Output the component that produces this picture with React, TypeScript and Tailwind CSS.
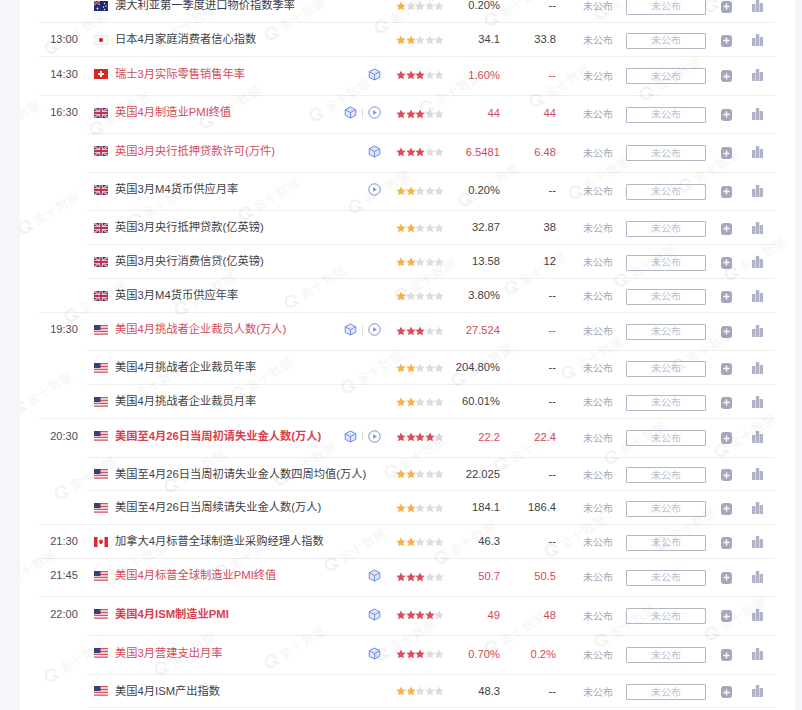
import type { FC } from 'react';

type Row = {
  time?: string;
  flag: 'au' | 'jp' | 'ch' | 'uk' | 'us' | 'ca';
  name: string;
  stars: number;
  prev: string;
  cons: string;
  h: string;
  tall?: boolean;
  bold?: boolean;
  cube?: boolean;
  play?: boolean;
  last?: boolean;
};

const rows: Row[] = [
  { flag: 'au', name: '澳大利亚第一季度进口物价指数季率', stars: 1, prev: '0.20%', cons: '--', h: 'h-[34px]', last: true },
  { time: '13:00', flag: 'jp', name: '日本4月家庭消费者信心指数', stars: 2, prev: '34.1', cons: '33.8', h: 'h-[34px]', last: true },
  { time: '14:30', flag: 'ch', name: '瑞士3月实际零售销售年率', stars: 3, prev: '1.60%', cons: '--', h: 'h-[39px]', tall: true, cube: true, last: true },
  { time: '16:30', flag: 'uk', name: '英国4月制造业PMI终值', stars: 3, prev: '44', cons: '44', h: 'h-[38px]', tall: true, cube: true, play: true },
  { flag: 'uk', name: '英国3月央行抵押贷款许可(万件)', stars: 3, prev: '6.5481', cons: '6.48', h: 'h-[39px]', tall: true, cube: true },
  { flag: 'uk', name: '英国3月M4货币供应月率', stars: 2, prev: '0.20%', cons: '--', h: 'h-[38px]', tall: true, play: true },
  { flag: 'uk', name: '英国3月央行抵押贷款(亿英镑)', stars: 2, prev: '32.87', cons: '38', h: 'h-[34px]' },
  { flag: 'uk', name: '英国3月央行消费信贷(亿英镑)', stars: 2, prev: '13.58', cons: '12', h: 'h-[34px]' },
  { flag: 'uk', name: '英国3月M4货币供应年率', stars: 1, prev: '3.80%', cons: '--', h: 'h-[34px]', last: true },
  { time: '19:30', flag: 'us', name: '美国4月挑战者企业裁员人数(万人)', stars: 3, prev: '27.524', cons: '--', h: 'h-[38px]', tall: true, cube: true, play: true },
  { flag: 'us', name: '美国4月挑战者企业裁员年率', stars: 2, prev: '204.80%', cons: '--', h: 'h-[34px]' },
  { flag: 'us', name: '美国4月挑战者企业裁员月率', stars: 2, prev: '60.01%', cons: '--', h: 'h-[34px]', last: true },
  { time: '20:30', flag: 'us', name: '美国至4月26日当周初请失业金人数(万人)', stars: 4, prev: '22.2', cons: '22.4', h: 'h-[39px]', tall: true, bold: true, cube: true, play: true },
  { flag: 'us', name: '美国至4月26日当周初请失业金人数四周均值(万人)', stars: 2, prev: '22.025', cons: '--', h: 'h-[33px]' },
  { flag: 'us', name: '美国至4月26日当周续请失业金人数(万人)', stars: 2, prev: '184.1', cons: '186.4', h: 'h-[34px]', last: true },
  { time: '21:30', flag: 'ca', name: '加拿大4月标普全球制造业采购经理人指数', stars: 2, prev: '46.3', cons: '--', h: 'h-[34px]', last: true },
  { time: '21:45', flag: 'us', name: '美国4月标普全球制造业PMI终值', stars: 3, prev: '50.7', cons: '50.5', h: 'h-[38px]', tall: true, cube: true, last: true },
  { time: '22:00', flag: 'us', name: '美国4月ISM制造业PMI', stars: 4, prev: '49', cons: '48', h: 'h-[39px]', tall: true, bold: true, cube: true },
  { flag: 'us', name: '美国3月营建支出月率', stars: 3, prev: '0.70%', cons: '0.2%', h: 'h-[39px]', tall: true, cube: true },
  { flag: 'us', name: '美国4月ISM产出指数', stars: 2, prev: '48.3', cons: '--', h: 'h-[33px]' },
];

// watermark rows: first x and y, measured from the shot (the rows climb slightly to the right)
const marks: [number, number][] = [
  [78, 32], [13, 120], [52, 212], [98, 300], [45, 392], [88, 477], [28, 570], [78, 660],
];

const Watermark: FC<{ x: number; y: number }> = ({ x, y }) => (
  <div
    className="absolute flex w-[76px] -rotate-[32deg] items-center gap-[3px] text-[13px] leading-none font-bold text-[#000000]/[0.05]"
    style={{ left: x - 38, top: y - 8 }}
  >
    <svg width="14" height="14" viewBox="0 0 14 14" fill="none" stroke="currentColor" strokeWidth="2.4" className="shrink-0">
      <path d="M10 11.2A5.6 5.6 0 1 1 12.4 7" />
      <path d="M7.5 7.5l5 5" />
    </svg>
    <span>金十数据</span>
  </div>
);

const Star: FC<{ color: string }> = ({ color }) => (
  <svg width="10" height="10" viewBox="0 0 20 20" className={`-mr-[0.4px] shrink-0 ${color}`}>
    <path fill="currentColor" d="M10 .8l2.9 6 6.5.8-4.8 4.5 1.3 6.6L10 15.4l-5.9 3.3 1.3-6.6L.6 7.6l6.5-.8z" />
  </svg>
);

const Stars: FC<{ count: number }> = ({ count }) => (
  <div className="flex w-[60px] pl-[11px]">
    {[0, 1, 2, 3, 4].map((i) => (
      <Star key={i} color={i >= count ? 'text-[#dcdcdc]' : count >= 3 ? 'text-[#e04a5c]' : 'text-[#f8b148]'} />
    ))}
  </div>
);

const Flag: FC<{ kind: Row['flag'] }> = ({ kind }) => {
  if (kind === 'au') {
    return (
      <svg width="14" height="10" viewBox="0 0 14 10" className="shrink-0">
        <rect width="14" height="10" fill="#1c2a6e" />
        <path d="M0 0l6 4M6 0L0 4" stroke="#d8c4d0" strokeWidth="1" />
        <path d="M3 0v4M0 2h6" stroke="#c8384c" strokeWidth="1" />
        <circle cx="10.5" cy="2.5" r=".7" fill="#fff" />
        <circle cx="12" cy="5" r=".7" fill="#fff" />
        <circle cx="9.5" cy="6" r=".7" fill="#fff" />
        <circle cx="3.5" cy="7.5" r=".9" fill="#fff" />
        <circle cx="10.5" cy="8.5" r=".7" fill="#fff" />
      </svg>
    );
  }
  if (kind === 'jp') {
    return (
      <svg width="14" height="10" viewBox="0 0 14 10" className="shrink-0">
        <rect x=".5" y=".5" width="13" height="9" fill="#fff" stroke="#e6e6e6" />
        <circle cx="7" cy="5" r="2.2" fill="#e8202c" />
      </svg>
    );
  }
  if (kind === 'ch') {
    return (
      <svg width="14" height="10" viewBox="0 0 14 10" className="shrink-0">
        <rect width="14" height="10" fill="#d7281f" />
        <path d="M7 2v6M4 5h6" stroke="#fff" strokeWidth="2" />
      </svg>
    );
  }
  if (kind === 'uk') {
    return (
      <svg width="14" height="10" viewBox="0 0 14 10" className="shrink-0">
        <rect width="14" height="10" fill="#2b2f6e" />
        <path d="M0 0l14 10M14 0L0 10" stroke="#e4d4dc" strokeWidth="2" />
        <path d="M0 0l14 10M14 0L0 10" stroke="#c33a52" strokeWidth=".7" />
        <path d="M7 0v10M0 5h14" stroke="#f0e6ea" strokeWidth="3.4" />
        <path d="M7 0v10M0 5h14" stroke="#c8304a" strokeWidth="1.8" />
      </svg>
    );
  }
  if (kind === 'ca') {
    return (
      <svg width="14" height="10" viewBox="0 0 14 10" className="shrink-0">
        <rect width="14" height="10" fill="#fff" />
        <rect width="3.5" height="10" fill="#d62b35" />
        <rect x="10.5" width="3.5" height="10" fill="#d62b35" />
        <path d="M7 2l.8 1.3 1.1-.4-.3 1.5.9.4L8 6.2l.2.9H5.8l.2-.9-1.5-1.4.9-.4-.3-1.5 1.1.4z" fill="#d62b35" />
      </svg>
    );
  }
  return (
    <svg width="14" height="10" viewBox="0 0 14 10" className="shrink-0">
      <rect width="14" height="10" fill="#f6eef0" />
      <path d="M0 .7h14M0 3.5h14M0 6.3h14M0 9.2h14" stroke="#d9525f" strokeWidth="1.3" />
      <rect width="6.5" height="5" fill="#3a3f7a" />
    </svg>
  );
};

const Cube: FC = () => (
  <svg width="13" height="13" viewBox="0 0 13 13" fill="#dfe7fa" stroke="#6f8fd8" strokeWidth="1" strokeLinejoin="round" className="shrink-0">
    <path d="M6.5 1L11.8 3.7V9.3L6.5 12L1.2 9.3V3.7Z" />
    <path d="M1.4 3.8L6.5 6.5L11.6 3.8M6.5 6.5V12" fill="none" />
  </svg>
);

const Play: FC = () => (
  <svg width="13" height="13" viewBox="0 0 13 13" className="shrink-0">
    <circle cx="6.5" cy="6.5" r="5.7" fill="none" stroke="#6f8fd8" strokeWidth="1" />
    <path d="M5.2 4.2L8.8 6.5L5.2 8.8Z" fill="#6f8fd8" />
  </svg>
);

const Plus: FC = () => (
  <div className="ml-[15px] mt-[2px] flex h-[12px] w-[11px] items-center justify-center rounded-[3px] bg-[#a5a7bd]">
    <svg width="7" height="7" viewBox="0 0 7 7" stroke="#fff" strokeWidth="1.3">
      <path d="M3.5 .5v6M.5 3.5h6" />
    </svg>
  </div>
);

const Bars: FC = () => (
  <svg width="11" height="12" viewBox="0 0 11 12" fill="#b0b2c8" className="ml-[20px]">
    <rect x="0" y="4" width="3.4" height="8" />
    <rect x="3.8" y="0" width="3.4" height="12" />
    <rect x="7.6" y="3" width="3.4" height="9" />
  </svg>
);

const CalendarRow: FC<{ row: Row }> = ({ row }) => {
  const hot = row.stars >= 3;
  const num = hot ? 'text-[#d14b5c]' : 'text-[#3f4148]';
  return (
    <div className={`flex ${row.h}`}>
      <div
        className={`flex w-[48px] items-center justify-center border-b pl-[2px] ${row.last ? 'border-[#eeeeee]' : 'border-transparent'} text-[11px] text-[#4a4d55]`}
      >
        <span className={row.tall ? '-mt-[4px]' : ''}>{row.time}</span>
      </div>
      <div className={`flex flex-1 items-center border-b border-[#eeeeee] ${row.tall ? 'pb-[2px]' : ''}`}>
        <div className={`flex w-[298px] items-center pl-[7px] pr-[4px] ${row.tall ? '-mt-[2px]' : ''}`}>
          <Flag kind={row.flag} />
          <span
            className={`ml-[7px] whitespace-nowrap text-[11.25px] ${hot ? 'text-[#d14b5c]' : 'text-[#3f4148]'} ${row.bold ? 'font-bold text-[#d9404f]' : ''}`}
          >
            {row.name}
          </span>
          <div className="ml-auto flex items-center">
            {row.cube && <Cube />}
            {row.cube && row.play && <div className="mx-[5px] h-[10px] w-px bg-[#dddddd]" />}
            {row.play && <Play />}
          </div>
        </div>
        <Stars count={row.stars} />
        <div className={`w-[55px] text-right text-[11.2px] ${num}`}>{row.prev}</div>
        <div className={`w-[56px] text-right text-[11.2px] ${num}`}>{row.cons}</div>
        <div className="ml-[27px] mt-[2px] w-[30px] text-[10px] whitespace-nowrap text-[#a8a9b5]">未公布</div>
        <div className="ml-[13px] mt-[2px] flex h-[16px] w-[80px] items-center justify-center rounded-[1px] border border-[#b5b6c4] text-[10px] text-[#c0c1cc]">
          未公布
        </div>
        <Plus />
        <Bars />
      </div>
    </div>
  );
};

const App: FC = () => {
  return (
    <div className="h-[710px] w-full overflow-hidden bg-[#f4f6fb] font-['Liberation_Sans','Noto_Sans_CJK_SC',sans-serif]">
      <div className="relative ml-[20px] h-full w-[775px] overflow-hidden bg-white pl-[19px]">
        <div className="-mt-[11px] w-[736px]">
          {rows.map((row) => (
            <CalendarRow key={row.name} row={row} />
          ))}
        </div>

        {/* Watermark */}
        <div className="pointer-events-none absolute inset-0">
          {marks.flatMap(([x0, y0], r) =>
            [0, 1, 2, 3, 4, 5, 6].map((i) => {
              const x = x0 + i * 110;
              return <Watermark key={`${r}-${i}`} x={x - 20} y={y0 - i * 7} />;
            })
          )}
        </div>
      </div>
    </div>
  );
};

export default App;
